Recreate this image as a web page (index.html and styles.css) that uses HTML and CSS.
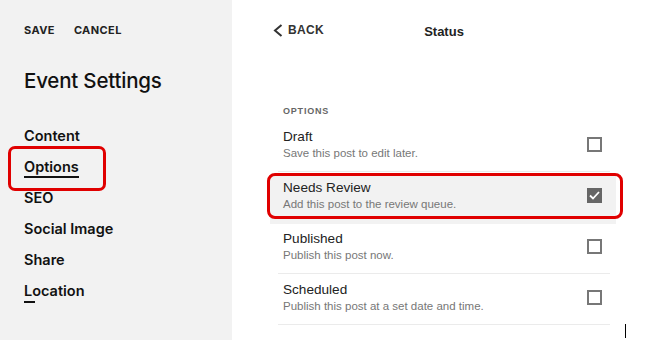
FILE: index.html
```html
<!DOCTYPE html>
<html lang="en">
<head>
    <meta charset="UTF-8">
    <meta name="viewport" content="width=device-width, initial-scale=1.0">
    <title>Event Settings - Status</title>
    <link rel="stylesheet" href="styles.css">
</head>
<body>
    <aside class="sidebar">
        <div class="actions">
            <span>SAVE</span>
            <span>CANCEL</span>
        </div>
        <h1>Event Settings</h1>
        <nav class="nav">
            <a>Content</a>
            <a class="active marked">Options</a>
            <a>SEO</a>
            <a>Social Image</a>
            <a>Share</a>
            <a class="short">Location</a>
        </nav>
    </aside>

    <main class="panel">
        <header class="panel-head">
            <span class="back">
                <svg width="10" height="13" viewBox="0 0 10 13"><polyline points="8.5,1 2,6.5 8.5,12" fill="none" stroke="#333" stroke-width="2"/></svg>
                BACK
            </span>
            <span class="title">Status</span>
        </header>

        <div class="section-label">OPTIONS</div>
        <ul class="options">
            <li>
                <div><h3>Draft</h3><p>Save this post to edit later.</p></div>
                <span class="box"></span>
            </li>
            <li class="selected">
                <div><h3>Needs Review</h3><p>Add this post to the review queue.</p></div>
                <span class="box checked">
                    <svg width="11" height="9" viewBox="0 0 11 9"><polyline points="1,4.5 4,7.5 10,1" fill="none" stroke="#fff" stroke-width="1.8"/></svg>
                </span>
            </li>
            <li>
                <div><h3>Published</h3><p>Publish this post now.</p></div>
                <span class="box"></span>
            </li>
            <li>
                <div><h3>Scheduled</h3><p>Publish this post at a set date and time.</p></div>
                <span class="box"></span>
            </li>
        </ul>
    </main>
    <span class="cursor"></span>
</body>
</html>
```

FILE: styles.css
```css
body {
    margin: 0;
    font-family: Inter, "Liberation Sans", Arial, sans-serif;
    display: flex;
    height: 340px;
    overflow: hidden;
    background: #fff;
    color: #111;
    position: relative;
}

.sidebar {
    width: 232px;
    background-color: #f2f2f2;
    padding: 23px 0 0 24px;
    box-sizing: border-box;
}

.actions {
    display: flex;
    gap: 19px;
    font-size: 11px;
    font-weight: 700;
    letter-spacing: 0.4px;
    color: #222;
    line-height: 14px;
}

.sidebar h1 {
    margin: 32px 0 0 0;
    font-size: 20.5px;
    font-weight: 500;
    line-height: 24px;
    letter-spacing: -0.2px;
}

.nav {
    display: flex;
    flex-direction: column;
    margin-top: 34px;
}

.nav a {
    font-size: 14.5px;
    font-weight: 600;
    line-height: 18px;
    height: 31px;
    position: relative;
    align-self: flex-start;
}

.nav a.active::before {
    content: "";
    position: absolute;
    left: 0;
    right: 0;
    top: 18px;
    height: 2px;
    background: #111;
}

.nav a.short::before {
    content: "";
    position: absolute;
    left: 0;
    width: 11px;
    top: 19px;
    height: 2px;
    background: #111;
}

.nav a.marked::after {
    content: "";
    position: absolute;
    left: -16px;
    right: -27px;
    top: -12px;
    bottom: -2px;
    border: 3px solid #e00000;
    border-radius: 7px;
}

.panel {
    padding: 0 36px 0 46px;
    width: 332px;
    font-family: "Liberation Sans", Arial, sans-serif;
}

.panel-head {
    display: flex;
    align-items: center;
    height: 30px;
    margin-top: 15px;
    position: relative;
    justify-content: center;
}

.back {
    position: absolute;
    left: -5px;
    top: 8px;
    display: flex;
    align-items: center;
    gap: 5px;
    font-size: 12px;
    font-weight: 700;
    letter-spacing: 0.3px;
    color: #333;
}

.title {
    font-size: 13px;
    font-weight: 700;
    color: #222;
    margin-top: 2px;
}

.section-label {
    margin: 61px 0 0 5px;
    font-size: 9px;
    font-weight: 700;
    letter-spacing: 0.8px;
    color: #666;
}

.options {
    list-style: none;
    margin: 5px 0 0 0;
    padding: 0;
}

.options li {
    display: flex;
    align-items: center;
    justify-content: space-between;
    height: 50px;
    padding: 0 8px 0 5px;
    border-bottom: 1px solid #ebebeb;
    position: relative;
}

.options li > div {
    position: relative;
    z-index: 1;
    margin-top: -4px;
}

.options h3 {
    margin: 0;
    font-size: 13.6px;
    font-weight: 400;
    color: #222;
    line-height: 18px;
}

.options p {
    margin: 0;
    font-size: 11.5px;
    color: #777;
    line-height: 14px;
}

.options li.selected::before {
    content: "";
    position: absolute;
    left: -8px;
    right: -6px;
    top: 2px;
    bottom: -2px;
    background: #f2f2f2;
}

.options li.selected::after {
    content: "";
    position: absolute;
    left: -11px;
    right: -13px;
    top: 1px;
    bottom: 3px;
    border: 3px solid #e00000;
    border-radius: 8px;
    z-index: 2;
}

.box {
    width: 15px;
    height: 15px;
    box-sizing: border-box;
    border: 2px solid #777;
    background: #fff;
    position: relative;
    z-index: 1;
    margin-top: -4px;
    display: flex;
    align-items: center;
    justify-content: center;
}

.box.checked {
    background: #666;
    border-color: #666;
}

.cursor {
    position: absolute;
    left: 625px;
    top: 324px;
    width: 1px;
    height: 14px;
    background: #000;
}
```
